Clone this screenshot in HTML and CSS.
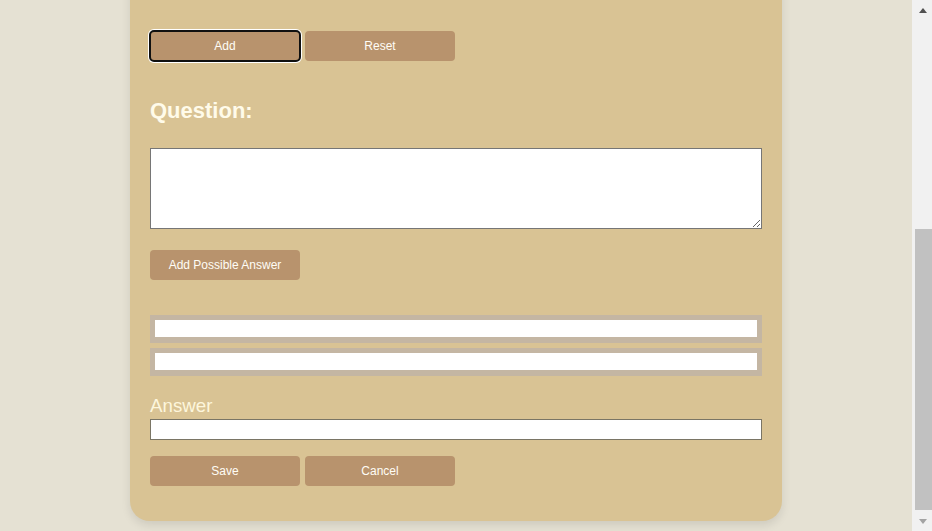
FILE: index.html
```html
<!DOCTYPE html>
<html lang="en">
<head>
<meta charset="utf-8">
<title>Quiz Editor</title>
<link rel="stylesheet" href="styles.css">
</head>
<body>
<main class="page">
  <section class="card">
    <h1 class="title">Create a Quiz</h1>
    <label class="field-label" for="quiz-title">Quiz Title</label>
    <input class="text-input" id="quiz-title" type="text">
    <label class="field-label" for="quiz-desc">Description</label>
    <textarea class="text-area" id="quiz-desc"></textarea>
    <label class="field-label" for="quiz-cat">Category</label>
    <input class="text-input" id="quiz-cat" type="text">
    <h2 class="section-title">Questions</h2>

    <div class="btn-row top-actions">
      <button class="btn is-focused" type="button">Add</button>
      <button class="btn" type="button">Reset</button>
    </div>

    <h2 class="question-title">Question:</h2>
    <textarea class="text-area question-area"></textarea>

    <button class="btn add-answer" type="button">Add Possible Answer</button>

    <div class="answers">
      <div class="answer-row"><input class="answer-input" type="text"></div>
      <div class="answer-row"><input class="answer-input" type="text"></div>
    </div>

    <label class="answer-label" for="answer">Answer</label>
    <input class="text-input answer-field" id="answer" type="text">

    <div class="btn-row bottom-actions">
      <button class="btn" type="button">Save</button>
      <button class="btn" type="button">Cancel</button>
    </div>
  </section>
</main>
<div class="scrollbar" aria-hidden="true">
  <span class="scroll-arrow up"></span>
  <span class="scroll-track"><span class="scroll-thumb"></span></span>
  <span class="scroll-arrow down"></span>
</div>
<script src="script.js"></script>
</body>
</html>
```

FILE: styles.css
```css
html, body {
  margin: 0;
  padding: 0;
  background: #e5e1d3;
  font-family: "Liberation Sans", Arial, sans-serif;
}

.page {
  padding: 10px 20px 10px 0;
}

.card {
  width: 652px;
  box-sizing: border-box;
  margin: 0 auto;
  padding: 20px 20px 35px;
  background: #d9c394;
  border-radius: 20px;
  box-shadow: 0 4px 10px rgba(0, 0, 0, 0.1);
  display: flex;
  flex-direction: column;
  align-items: flex-start;
}

.title {
  margin: 0;
  font-size: 28px;
  line-height: 32px;
  color: #fffbea;
}

.field-label {
  margin-top: 18px;
  font-size: 18.72px;
  line-height: 22px;
  color: #fdf6dc;
}

.text-input {
  display: block;
  width: 100%;
  box-sizing: border-box;
  height: 21px;
  margin: 2px 0 0;
  padding: 1px 2px;
  border: 1px solid #7a7565;
  border-radius: 0;
  background: #fff;
  font: 13px "Liberation Sans", Arial, sans-serif;
}

.text-area {
  display: block;
  width: 100%;
  box-sizing: border-box;
  height: 81px;
  margin: 2px 0 0;
  border: 1px solid #767676;
  border-radius: 0;
  background: #fff;
  font: 13px "Liberation Mono", monospace;
}

.section-title {
  margin: 22px 0 0;
  font-size: 22px;
  line-height: 25px;
  color: #fffbea;
}

.btn-row {
  display: flex;
  gap: 5px;
}

.top-actions {
  margin-top: 48px;
}

.btn {
  width: 150px;
  height: 30px;
  padding: 0;
  border: none;
  border-radius: 4px;
  background: #b8936d;
  color: #fffdf6;
  font: 12px "Liberation Sans", Arial, sans-serif;
  cursor: pointer;
}

.btn.is-focused {
  outline: 2px solid #101010;
  outline-offset: -1px;
  box-shadow: 0 0 0 2px #fff;
}

.question-title {
  margin: 37px 0 0;
  font-size: 22px;
  line-height: 25px;
  font-weight: bold;
  color: #fffbea;
}

.question-area {
  margin-top: 25px;
}

.add-answer {
  margin-top: 21px;
}

.answers {
  margin-top: 35px;
  width: 100%;
  display: flex;
  flex-direction: column;
  gap: 5px;
}

.answer-row {
  background: #c4b6a3;
  padding: 5px 5px 6px;
  height: 28px;
  box-sizing: border-box;
  display: flex;
}

.answer-input {
  flex: 1;
  height: 17px;
  box-sizing: border-box;
  margin: 0;
  padding: 0 3px;
  border: none;
  background: #fff;
  font: 12px "Liberation Sans", Arial, sans-serif;
}

.answer-label {
  margin-top: 19px;
  font-size: 18.72px;
  line-height: 22px;
  color: #fdf6dc;
}

.answer-field {
  margin-top: 2px;
}

.bottom-actions {
  margin-top: 16px;
}

/* browser-style vertical scrollbar overlay */
.scrollbar {
  position: fixed;
  top: 0;
  right: 0;
  width: 20px;
  height: 100%;
  background: #f1f1f1;
  display: flex;
  flex-direction: column;
  align-items: center;
}

.scroll-arrow {
  flex: 0 0 17px;
  width: 17px;
  display: flex;
  align-items: center;
  justify-content: center;
  margin-left: 2px;
}

.scroll-arrow::before {
  content: "";
  width: 0;
  height: 0;
  border-left: 4.5px solid transparent;
  border-right: 4.5px solid transparent;
}

.scroll-arrow.up::before {
  border-bottom: 5px solid #505050;
  margin-top: 3px;
}

.scroll-arrow.down::before {
  border-top: 5px solid #a3a3a3;
  margin-top: -3px;
}

.scroll-track {
  flex: 1;
  width: 17px;
  margin-left: 2px;
  display: flex;
  flex-direction: column;
  justify-content: flex-end;
}

.scroll-thumb {
  height: 281px;
  margin-bottom: 4px;
  background: #c1c1c1;
}
```

FILE: script.js
```js
window.scrollTo(0, document.documentElement.scrollHeight);
```
